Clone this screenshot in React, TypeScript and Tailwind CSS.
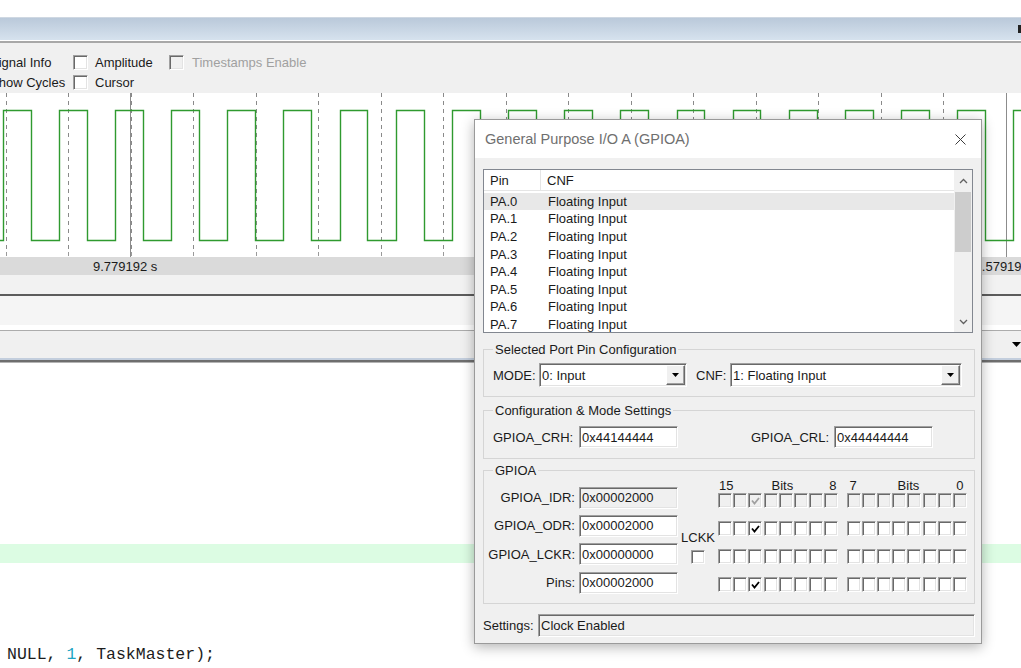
import React from 'react';

// classic sunken edit/checkbox edge
const SUNKEN =
  'border border-t-[#a0a0a0] border-l-[#a0a0a0] border-b-white border-r-white shadow-[inset_1px_1px_0_#696969,inset_-1px_-1px_0_#e3e3e3]';

const PINS = ['PA.0', 'PA.1', 'PA.2', 'PA.3', 'PA.4', 'PA.5', 'PA.6', 'PA.7'];

const REGS = [
  { name: 'GPIOA_IDR:', value: '0x00002000', disabled: true },
  { name: 'GPIOA_ODR:', value: '0x00002000', disabled: false },
  { name: 'GPIOA_LCKR:', value: '0x00000000', disabled: false },
  { name: 'Pins:', value: '0x00002000', disabled: false },
];

// which rows have bit 13 set
const BIT13 = [true, true, false, true];

function Waveform() {
  const hi = 17.5;
  const lo = 147.5;
  let d = `M0 ${lo}`;
  for (let k = 0; k < 19; k++) {
    const r = Math.round(2.7 + 56.15 * k) + 0.5;
    const f = Math.round(2.7 + 56.15 * k + 27.8) + 0.5;
    d += ` L${r} ${lo} L${r} ${hi} L${f} ${hi} L${f} ${lo}`;
  }
  const grid = Array.from({ length: 17 }, (_, i) => Math.round(5.5 + 62.5 * i) + 0.5);
  const cursors = [130.5, 1006.5];

  return (
    <svg width="1021" height="164" className="block">
      {grid.map((x) =>
        cursors.includes(x) ? null : (
          <line key={x} x1={x} y1="0" x2={x} y2="157" stroke="#8a8a8a" strokeDasharray="4 4" />
        )
      )}
      {grid.map((x) => (
        <line key={'t' + x} x1={x} y1="159" x2={x} y2="163" stroke="#9a9a9a" />
      ))}
      {cursors.map((x) => (
        <line key={'c' + x} x1={x} y1="0" x2={x} y2="164" stroke="#8c8c8c" />
      ))}
      <path d={d} fill="none" stroke="#2f9a2f" strokeWidth="1.4" />
    </svg>
  );
}

function Check({ color }: { color: string }) {
  return (
    <svg width="9" height="8" viewBox="0 0 9 8" className="block">
      <path d="M1 3.5 L3.5 6.5 L8 1" fill="none" stroke={color} strokeWidth="1.8" />
    </svg>
  );
}

function Chevron({ up }: { up?: boolean }) {
  return (
    <svg width="9" height="6" viewBox="0 0 9 6" className="block">
      <polyline
        points={up ? '1,5 4.5,1.5 8,5' : '1,1 4.5,4.5 8,1'}
        fill="none"
        stroke="#606060"
        strokeWidth="1.3"
      />
    </svg>
  );
}

function Select({ value, width }: { value: string; width: string }) {
  return (
    <div className={`${width} h-[24px] bg-white flex items-center ${SUNKEN}`}>
      <span className="flex-1 pl-[2px] whitespace-nowrap">{value}</span>
      <div className="w-[19px] h-[20px] mr-[1px] bg-[#f0f0f0] border border-t-white border-l-white border-b-[#696969] border-r-[#696969] shadow-[inset_-1px_-1px_0_#a0a0a0] flex items-center justify-center">
        <svg width="7" height="4" viewBox="0 0 7 4" className="block">
          <path d="M0 0 H7 L3.5 4 Z" fill="#000" />
        </svg>
      </div>
    </div>
  );
}

function Field({ value, disabled }: { value: string; disabled?: boolean }) {
  return (
    <div
      className={`w-[99px] h-[22px] flex items-center pl-[2px] ${disabled ? 'bg-[#f0f0f0]' : 'bg-white'} ${SUNKEN}`}
    >
      {value}
    </div>
  );
}

function Bit({ checked, disabled }: { checked?: boolean; disabled?: boolean }) {
  return (
    <div
      className={`w-[14px] h-[15px] flex items-center justify-center ${disabled ? 'bg-[#f0f0f0]' : 'bg-white'} ${SUNKEN}`}
    >
      {checked && <Check color={disabled ? '#a0a0a0' : '#000'} />}
    </div>
  );
}

function BitRow({ row }: { row: number }) {
  const disabled = row === 0;
  return (
    <div className="h-[15px] flex">
      <div className="flex gap-[1.2px]">
        {[15, 14, 13, 12, 11, 10, 9, 8].map((b) => (
          <Bit key={b} disabled={disabled} checked={b === 13 && BIT13[row]} />
        ))}
      </div>
      <div className="flex gap-[1.2px] ml-[8.3px]">
        {[7, 6, 5, 4, 3, 2, 1, 0].map((b) => (
          <Bit key={b} disabled={disabled} />
        ))}
      </div>
    </div>
  );
}

function ToolCheck({ disabled }: { disabled?: boolean }) {
  return (
    <div className={`w-[15px] h-[15px] shrink-0 ${disabled ? 'bg-[#f0f0f0]' : 'bg-white'} ${SUNKEN}`} />
  );
}

export default function App() {
  return (
    <div className="relative w-[1021px] h-[668px] overflow-hidden bg-white font-['Liberation_Sans',Arial,sans-serif] text-[13px] leading-[15px] text-[#1a1a1a]">
      {/* Background: logic analyzer window */}
      <div className="flex flex-col">
        <div className="h-[17px] bg-white" />
        <div className="h-[23px] bg-gradient-to-b from-[#bac9da] to-[#d6e2ee] border-t border-[#cfd8e2] flex justify-end items-center">
          <div className="w-[3px] h-[8px] bg-[#222]" />
        </div>
        <div className="h-px bg-white" />
        <div className="h-[2px] bg-[#a8a8a8]" />

        {/* toolbar */}
        <div className="h-[50px] bg-[#f0f0f0] pt-[9px] flex flex-col">
          <div className="h-[20px] flex items-center">
            <div className="w-[83px] ml-[-10px] whitespace-nowrap">Signal Info</div>
            <div className="w-[96px] flex items-center">
              <ToolCheck />
              <span className="ml-[7px]">Amplitude</span>
            </div>
            <div className="flex items-center">
              <ToolCheck disabled />
              <span className="ml-[8px] text-[#a0a0a0]">Timestamps Enable</span>
            </div>
          </div>
          <div className="h-[20px] flex items-center">
            <div className="w-[83px] ml-[-10px] whitespace-nowrap">Show Cycles</div>
            <div className="flex items-center">
              <ToolCheck />
              <span className="ml-[7px]">Cursor</span>
            </div>
          </div>
        </div>

        {/* waveform */}
        <div className="h-[164px] bg-white">
          <Waveform />
        </div>
        <div className="h-[18px] bg-[#dadada] flex items-center whitespace-nowrap">
          <span className="ml-[93px]">9.779192 s</span>
          <span className="ml-[810px]">12.579192 s</span>
        </div>
        <div className="h-[19px] bg-[#f2f2f2]" />
        <div className="h-[2px] bg-[#5c5c5c]" />
        <div className="h-[29px] bg-[#f5f5f5]" />
        <div className="h-[5px] bg-white" />
        <div className="h-px bg-[#acacac]" />
        <div className="h-[27px] bg-[#f0f0f0] flex items-center justify-end">
          <svg width="9" height="5" viewBox="0 0 9 5" className="block">
            <path d="M0 0 H9 L4.5 5 Z" fill="#000" />
          </svg>
        </div>
        <div className="h-[2px] bg-[#c3cedd]" />
        <div className="h-[2px] bg-[#6e6e6e]" />
        <div className="h-px bg-[#b4b4b4]" />

        {/* editor */}
        <div className="h-[181px]" />
        <div className="h-[19px] bg-[#dcfce3]" />
        <div className="h-[81px]" />
        <div className="h-[20px] flex items-center pl-[7px] font-['Liberation_Mono','Courier_New',monospace] text-[16.5px] text-[#1c1c1c] whitespace-pre">
          NULL, <span className="text-[#1ea5c4]">1</span>, TaskMaster);
        </div>
      </div>

      {/* GPIOA peripheral dialog */}
      <div className="absolute left-[474px] top-[119px] w-[508px] h-[525px] border border-[#9a9a9a] bg-[#f0f0f0] shadow-[0_3px_12px_rgba(0,0,0,0.3)] flex flex-col">
        <div className="h-[38px] shrink-0 bg-white flex items-center justify-between pl-[10px] pr-[15px]">
          <span className="text-[14.5px] text-[#6f6f6f]">General Purpose I/O A (GPIOA)</span>
          <svg width="11" height="11" viewBox="0 0 11 11" className="block">
            <path d="M0.5 0.5 L10.5 10.5 M10.5 0.5 L0.5 10.5" stroke="#3c3c3c" strokeWidth="1" />
          </svg>
        </div>

        <div className="flex-1 flex flex-col pl-[8px] pr-[6px] pt-[11px]">
          {/* pin list */}
          <div className="h-[164px] mr-[2px] border border-[#828790] bg-white flex overflow-hidden">
            <div className="flex-1 flex flex-col overflow-hidden">
              <div className="h-[21px] shrink-0 flex items-center border-b border-[#e5e5e5]">
                <div className="w-[57px] h-full flex items-center pl-[6px] border-r border-[#e5e5e5]">Pin</div>
                <div className="pl-[6px]">CNF</div>
              </div>
              <div className="pt-[1.5px]">
                {PINS.map((p, i) => (
                  <div key={p} className={`h-[17.6px] flex items-center ${i === 0 ? 'bg-[#e8e8e8]' : ''}`}>
                    <div className="w-[57px] pl-[6px]">{p}</div>
                    <div className="pl-[7px]">Floating Input</div>
                  </div>
                ))}
              </div>
            </div>
            <div className="w-[18px] shrink-0 bg-[#f0f0f0] flex flex-col">
              <div className="h-[22px] flex items-center justify-center">
                <Chevron up />
              </div>
              <div className="h-[60px] mx-[1px] bg-[#cdcdcd]" />
              <div className="flex-1" />
              <div className="h-[20px] flex items-center justify-center">
                <Chevron />
              </div>
            </div>
          </div>

          {/* selected pin */}
          <fieldset className="mt-[9px] border border-[#d5d5d5] pl-[9px] pr-[10px] pt-[6px] pb-[9px]">
            <legend className="px-[2px] leading-[15px]">Selected Port Pin Configuration</legend>
            <div className="flex items-center">
              <span className="w-[46px]">MODE:</span>
              <Select width="w-[148px]" value="0: Input" />
              <span className="ml-[9px] w-[34px]">CNF:</span>
              <Select width="w-[232px]" value="1: Floating Input" />
            </div>
          </fieldset>

          {/* config & mode */}
          <fieldset className="mt-[6px] border border-[#d5d5d5] pl-[9px] pr-[10px] pt-[8px] pb-[10px]">
            <legend className="px-[2px] leading-[15px]">Configuration &amp; Mode Settings</legend>
            <div className="flex items-center">
              <span className="w-[86px]">GPIOA_CRH:</span>
              <Field value="0x44144444" />
              <span className="ml-[73px] w-[83px]">GPIOA_CRL:</span>
              <Field value="0x44444444" />
            </div>
          </fieldset>

          {/* GPIOA registers */}
          <fieldset className="mt-[4px] border border-[#d5d5d5] pl-[3px] pr-[6px] pb-[9px]">
            <legend className="ml-[6px] px-[2px] leading-[15px]">GPIOA</legend>
            <div className="flex items-start">
              <div className="mt-[8.7px] flex flex-col gap-[6.3px]">
                {REGS.map((r) => (
                  <div key={r.name} className="flex items-center">
                    <div className="w-[88px] flex justify-end whitespace-nowrap">{r.name}</div>
                    <div className="ml-[4px]">
                      <Field value={r.value} disabled={r.disabled} />
                    </div>
                  </div>
                ))}
              </div>
              <div className="ml-[3px] w-[34px] mt-[51.5px] flex flex-col items-center">
                <span>LCKK</span>
                <div className={`mt-[5.5px] w-[14px] h-[14px] bg-white ${SUNKEN}`} />
              </div>
              <div className="ml-[3px] flex flex-col">
                <div className="h-[15px] flex items-center whitespace-nowrap">
                  <span className="ml-[1px]">15</span>
                  <span className="ml-[38px]">Bits</span>
                  <span className="ml-[36px]">8</span>
                  <span className="ml-[13px]">7</span>
                  <span className="ml-[41px]">Bits</span>
                  <span className="ml-[37px]">0</span>
                </div>
                <div className="flex flex-col gap-[13.1px]">
                  {[0, 1, 2, 3].map((r) => (
                    <BitRow key={r} row={r} />
                  ))}
                </div>
              </div>
            </div>
          </fieldset>

          {/* settings */}
          <div className="mt-[10.5px] flex items-center">
            <span className="w-[55px]">Settings:</span>
            <div className={`flex-1 h-[23px] flex items-center pl-[2px] bg-[#f0f0f0] ${SUNKEN}`}>Clock Enabled</div>
          </div>
        </div>
      </div>
    </div>
  );
}
